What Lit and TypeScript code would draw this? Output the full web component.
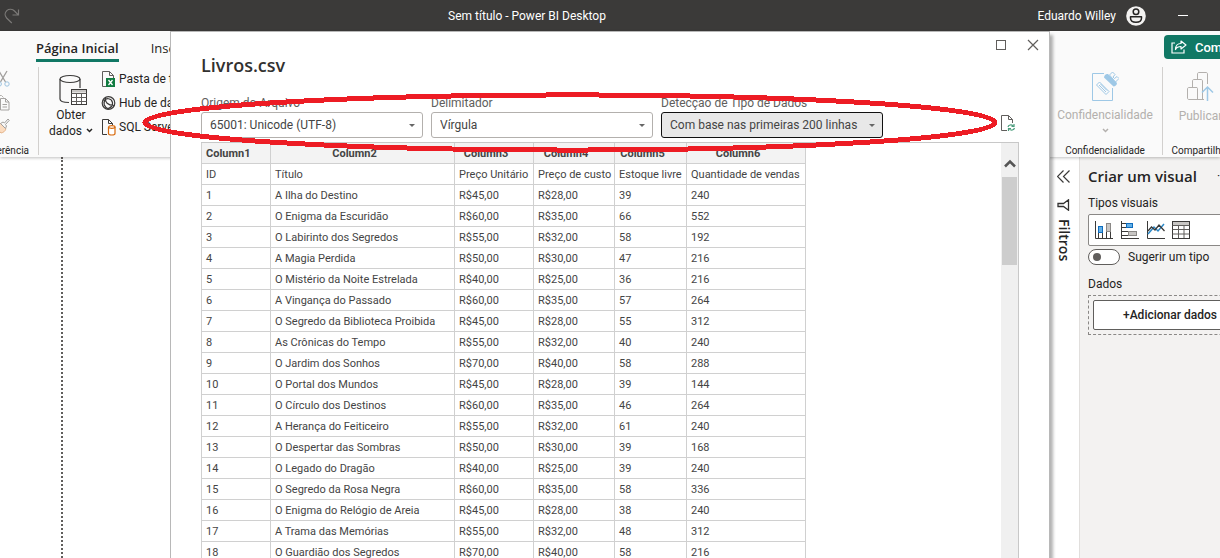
import { LitElement, html, css, svg } from "lit";
import { customElement, property } from "lit/decorators.js";

type Book = [string, string, string, string, string, string];

const BOOKS: Book[] = [
  ["ID", "Título", "Preço Unitário", "Preço de custo", "Estoque livre", "Quantidade de vendas"],
  ["1", "A Ilha do Destino", "R$45,00", "R$28,00", "39", "240"],
  ["2", "O Enigma da Escuridão", "R$60,00", "R$35,00", "66", "552"],
  ["3", "O Labirinto dos Segredos", "R$55,00", "R$32,00", "58", "192"],
  ["4", "A Magia Perdida", "R$50,00", "R$30,00", "47", "216"],
  ["5", "O Mistério da Noite Estrelada", "R$40,00", "R$25,00", "36", "216"],
  ["6", "A Vingança do Passado", "R$60,00", "R$35,00", "57", "264"],
  ["7", "O Segredo da Biblioteca Proibida", "R$45,00", "R$28,00", "55", "312"],
  ["8", "As Crônicas do Tempo", "R$55,00", "R$32,00", "40", "240"],
  ["9", "O Jardim dos Sonhos", "R$70,00", "R$40,00", "58", "288"],
  ["10", "O Portal dos Mundos", "R$45,00", "R$28,00", "39", "144"],
  ["11", "O Círculo dos Destinos", "R$60,00", "R$35,00", "46", "264"],
  ["12", "A Herança do Feiticeiro", "R$55,00", "R$32,00", "61", "240"],
  ["13", "O Despertar das Sombras", "R$50,00", "R$30,00", "39", "168"],
  ["14", "O Legado do Dragão", "R$40,00", "R$25,00", "39", "240"],
  ["15", "O Segredo da Rosa Negra", "R$60,00", "R$35,00", "58", "336"],
  ["16", "O Enigma do Relógio de Areia", "R$45,00", "R$28,00", "38", "240"],
  ["17", "A Trama das Memórias", "R$55,00", "R$32,00", "48", "312"],
  ["18", "O Guardião dos Segredos", "R$70,00", "R$40,00", "58", "216"],
];

const icon = (w: number, h: number, body: unknown) => html`
  <svg width=${w} height=${h} viewBox="0 0 ${w} ${h}" fill="none" aria-hidden="true">${body}</svg>`;

const icons = {
  redo: icon(16, 16, svg`<path d="M14.500 1.500v5.500H8.500M14 6.700 10.500 3C8.500.8 5 .7 2.800 2.600.6 4.700.6 7.800 2.600 10l5.200 5" stroke="#7b7977" stroke-width="1.200"/>`),
  user: icon(20, 20, svg`<circle cx="10" cy="10" r="9.800" fill="#f3f2f1"/><circle cx="10" cy="5.800" r="2.800" stroke="#252423" stroke-width="1.500"/><path d="M4.500 10.700h11v1.300c0 2.700-2.400 4.300-5.500 4.300S4.500 14.700 4.500 12z" stroke="#252423" stroke-width="1.500" stroke-linejoin="round"/>`),
  minimize: icon(10, 10, svg`<path d="M0 4.500h10" stroke="#fff"/>`),
  cut: icon(14, 18, svg`<path d="M3 1l6.500 11M11 1 4.500 12" stroke="#a19f9d" stroke-width="1.300"/><circle cx="3.200" cy="14" r="2.200" stroke="#9cc3e0"/><circle cx="11" cy="14" r="2.200" stroke="#9cc3e0"/>`),
  copy: icon(16, 16, svg`<path d="M6 12H1.500V.5h6l2 2" stroke="#b3b0ad"/><path d="M6.500 3.500h5l3.500 3.500v8H6.500zM11.500 3.500V7H15M8.500 9.500h4.500M8.500 12h4.500" stroke="#a6a4a2"/>`),
  brush: icon(16, 16, svg`<path d="M1 8.500 7 15c2.500-.5 4.500-2 5-4.500L6.500 5.500C5 7.500 3 8.300 1 8.500z" fill="#fbdcc0" stroke="#e5b58c"/><path d="M6.500 5.500 9 4l1.500 1L14 1l1.300 1.300L11.500 6.500l1 1.500-1 2.500z" stroke="#a19f9d" fill="#f8f8f8"/>`),
  database: icon(28, 32, svg`<ellipse cx="11" cy="5" rx="10" ry="3.500" stroke="#3b3a39" stroke-width="1.200"/><path d="M1 5v20c0 2 3.500 3.500 9 3.500M21 5v9" stroke="#3b3a39" stroke-width="1.200"/><rect x="12.500" y="15.500" width="15" height="15" fill="#fff" stroke="#3b3a39"/><path d="M13 16h14v2.500H13z" fill="#c8c6c4"/><path d="M12.500 19.500h15M12.500 23.500h15M12.500 27.500h15M17.500 19v11M22.500 19v11" stroke="#605e5c"/>`),
  chevron: icon(7, 5, svg`<path d="M1 1l2.500 2.500L6 1" stroke="currentColor" stroke-width="1.500"/>`),
  excel: icon(16, 17, svg`<path d="M5 15.500H1.500V.5h7l4 4V7M8.500.5v4h4" stroke="#605e5c"/><rect x="5" y="7" width="9" height="9" fill="#107c41"/><path d="M7.500 9l4 5M11.500 9l-4 5" stroke="#fff" stroke-width="1.300"/>`),
  hub: icon(16, 16, svg`<circle cx="7.500" cy="8" r="6.300" stroke="#3b3a39" stroke-width="1.200"/><path d="M4.500 3C4 7 6.500 10.500 13 10.500M2.500 6C5 2.500 10.500 3 11.500 7.500 12 10.500 9.500 13 6 14M4.500 4.500C1.500 8 3 12 7.500 14" stroke="#3b3a39" stroke-width="1.200"/>`),
  sql: icon(16, 17, svg`<path d="M6 15.500H1.500V.5h6l4 4V6M7.500.5v4h4" stroke="#3b3a39"/><path d="M7.500 8v6.500c0 1 1.500 1.500 3.300 1.500s3.200-.5 3.200-1.500V8" fill="#fff" stroke="#d8690b" stroke-width="1.200"/><ellipse cx="10.800" cy="8" rx="3.200" ry="1.300" fill="#fff" stroke="#d8690b" stroke-width="1.200"/>`),
  share: icon(16, 14, svg`<path d="M4 3H1v10h12V9.500" stroke="#fff" stroke-width="1.200"/><path d="M10 1l5 4-5 4V6.500C7 6.500 5.500 7.500 4.500 9.500c0-3.500 2-6 5.500-6z" stroke="#fff" stroke-width="1.200" stroke-linejoin="round"/>`),
  sensitivity: icon(28, 31, svg`<path d="M13 2.500H1.500v27h20V17" stroke="#9ec8e6"/><path d="M5.500 14 8.500 11l9.500 9.500-3 3z" stroke="#9ec8e6" fill="#fafafa"/><path d="M8 14l7 7M9.500 13l6.500 6.500" stroke="#9ec8e6"/><path d="M13 6.500c0-2 2-4 4-3.500l9 9c0 2-2 3.500-3.500 3.500z" fill="#9ec8e6"/><path d="M18.500 4l3-3 2.500 2.500-2 2.500 1.500 1.500L26 5.500 28 7.500l-3.500 3.500z" fill="#fafafa" stroke="#9ec8e6"/>`),
  publish: icon(28, 32, svg`<path d="M18 28.500H3c-1 0-1.500-.5-1.500-1.500v-9c0-1 .5-1.500 1.500-1.500h8M6.500 16.500V10c0-1 .5-1.500 1.500-1.500h7c1 0 1.500.5 1.500 1.500v18M11.500 8.500V3c0-1 .5-1.500 1.500-1.500h7c1 0 1.500.5 1.500 1.500v10M10.500 16.500c.7 0 1 .5 1 1v10.500" stroke="#b3b0ad"/><path d="M21.500 30V16M16 21.500l5.500-5.500 5.500 5.500" stroke="#9ec8e6" stroke-width="1.500"/>`),
  maximize: icon(12, 12, svg`<rect x="1.500" y="1.500" width="9" height="9" stroke="#605e5c"/>`),
  close: icon(12, 12, svg`<path d="M1 1l10 10M11 1 1 11" stroke="#605e5c" stroke-width="1.200"/>`),
  refresh: icon(16, 17, svg`<path d="M7 15.500H1.500V.5h7l4 4V8M8.500.5v4h4" stroke="#605e5c"/><path d="M8 12c.5-2 3.500-3 5-1M14 9v2.500h-2.500M14.500 13c-.5 2-3.500 3-5 1M8.500 16v-2.500H11" stroke="#4a9c7c" stroke-width="1.200"/>`),
  caret: icon(6, 3, svg`<path d="M0 0h6L3 3z" fill="#666"/>`),
  scrollUp: icon(12, 9, svg`<path d="M1 7.500 6 2.500l5 5" stroke="#555" stroke-width="2.500"/>`),
  collapse: icon(13, 13, svg`<path d="M6.500.5l-6 6 6 6M12.500.5l-6 6 6 6" stroke="#3b3a39" stroke-width="1.200"/>`),
  funnel: icon(13, 12, svg`<path d="M11.500.8v10.400L6.500 7.500H1v-3h5.500z" stroke="#323130" stroke-width="1.300"/>`),
  columns: icon(19, 19, svg`<path d="M1.500 0v17.500H19" stroke="#3b3a39"/><rect x="4.500" y="5.500" width="4" height="6" fill="#62b0e8" stroke="#0f6cbd"/><path d="M4.500 12v5M8.500 12v5M12.500 9v8M16.500 9v8" stroke="#3b3a39"/><rect x="12.500" y="2.500" width="4" height="8" fill="#c8c6c4" stroke="#8a8886"/>`),
  bars: icon(19, 19, svg`<path d="M1.500 0v18M2 2.500h4M2 6.500h4M2 10.500h7M2 14.500h7M2 17.500h17" stroke="#3b3a39"/><rect x="6.500" y="2.500" width="6" height="4" fill="#62b0e8" stroke="#0f6cbd"/><rect x="8.500" y="10.500" width="8" height="4" fill="#c8c6c4" stroke="#8a8886"/>`),
  lines: icon(19, 19, svg`<path d="M1.500 0v17.500H19" stroke="#3b3a39"/><path d="M2 13l6-7 4 4 6-7" stroke="#2b88c8" stroke-width="1.500"/><path d="M2 10l3.500-4L9 9l4-5 5.500 6" stroke="#3b3a39" stroke-width="1.300"/>`),
  grid: icon(19, 19, svg`<rect x=".5" y=".5" width="17" height="17" fill="#fff" stroke="#3b3a39"/><path d="M1 1h16v3H1z" fill="#c8c6c4"/><path d="M.5 4.500h17M.5 8.500h17M.5 13h17M6.500 4v13M12 4v13" stroke="#605e5c"/>`),
};

const base = css`
  * { box-sizing: border-box; }
  svg { display: block; flex: none; }
  button {
    font: inherit;
    color: inherit;
    background: none;
    border: 0;
    padding: 0;
    margin: 0;
    white-space: nowrap;
  }
`;

@customElement("option-field")
class OptionField extends LitElement {
  @property() label = "";
  @property() value = "";
  @property({ type: Boolean }) active = false;

  static styles = [base, css`
    :host { display: flex; flex-direction: column; gap: 0; flex: 0 1 222px; min-width: 0; }
    .label { font-size: 12px; line-height: 18px; white-space: nowrap; color: #605e5c; }
    .box { display: grid; align-items: center; }
    .box > * { grid-area: 1 / 1; }
    .box svg { justify-self: end; margin-right: 8px; pointer-events: none; }
    select {
      appearance: none;
      width: 100%;
      height: 26px;
      margin: 0;
      padding: 0 16px 0 8px;
      border: 1px solid #b3b0ad;
      border-radius: 3px;
      background: #fff;
      color: #444;
      font: inherit;
      font-size: 12px;
    }
    .active { background: #e8e8e8; border-color: #111; }
  `];

  render() {
    return html`
      <label class="label" for="field">${this.label}</label>
      <div class="box">
        <select id="field" class=${this.active ? "active" : ""}><option>${this.value}</option></select>
        ${icons.caret}
      </div>`;
  }
}

@customElement("csv-dialog")
class CsvDialog extends LitElement {
  static styles = [base, css`
    :host {
      display: flex;
      flex-direction: column;
      background: #fff;
      border: 1px solid #b8b8b8;
      box-shadow: 3px 4px 3px rgba(0, 0, 0, .3);
      color: #444;
      font-size: 11px;
    }
    .controls { display: flex; justify-content: flex-end; gap: 20px; padding: 7px 10px 0; height: 21px; }
    .controls button { height: 12px; }
    .title { margin: 0; padding-left: 30px; font-family: "Open Sans", sans-serif; font-size: 18px; line-height: 24px; font-weight: 600; color: #323130; }
    .options { display: flex; align-items: flex-end; gap: 8px; padding: 17px 30px 4px; }
    .refresh { margin: 0 3px 6px auto; }
    .preview {
      display: flex;
      justify-content: space-between;
      flex: 1;
      min-height: 0;
      overflow: hidden;
      margin: 0 30px;
      border-top: 1px solid #c8c8c8;
      border-right: 1px solid #c8c8c8;
    }
    table { table-layout: fixed; border-collapse: collapse; width: 605px; margin-top: -1px; align-self: flex-start; }
    th, td {
      height: 21px;
      padding: 2px 4px 0;
      border: 1px solid #d0d0d0;
      line-height: 18px;
      text-align: left;
      white-space: nowrap;
    }
    th { background: #f3f3f3; text-align: center; padding-right: 20px; }
    .id { width: 69px; }
    .name { width: 184px; }
    .price { width: 79px; }
    .cost { width: 81px; }
    .stock { width: 72px; }
    .sales { width: 119px; }
    th:first-child { text-align: left; }
    .scrollbar { display: flex; flex-direction: column; align-items: center; width: 17px; background: #f0f0f0; }
    .scrollbar button { padding: 16px 0 9px; }
    .thumb { width: 15px; height: 88px; background: #cdcdcd; }
    .mark { position: absolute; left: -26px; top: 65px; width: calc(100% - 28px); height: 51px; overflow: visible; pointer-events: none; }
  `];

  render() {
    return html`
      <div class="controls">
        <button aria-label="Maximizar">${icons.maximize}</button>
        <button aria-label="Fechar">${icons.close}</button>
      </div>
      <h1 class="title">Livros.csv</h1>
      <div class="options">
        <option-field label="Origem do Arquivo" value="65001: Unicode (UTF-8)"></option-field>
        <option-field label="Delimitador" value="Vírgula"></option-field>
        <option-field label="Detecção de Tipo de Dados" value="Com base nas primeiras 200 linhas" active></option-field>
        <button class="refresh" aria-label="Atualizar">${icons.refresh}</button>
      </div>
      <div class="preview">
        <table>
          <colgroup>${["id", "name", "price", "cost", "stock", "sales"].map((c) => html`<col class=${c}>`)}</colgroup>
          <thead><tr>${[1, 2, 3, 4, 5, 6].map((n) => html`<th>Column${n}</th>`)}</tr></thead>
          <tbody>${BOOKS.map((row) => html`<tr>${row.map((cell) => html`<td>${cell}</td>`)}</tr>`)}</tbody>
        </table>
        <div class="scrollbar">
          <button aria-label="Rolar para cima">${icons.scrollUp}</button>
          <div class="thumb"></div>
        </div>
      </div>
      <svg class="mark" aria-hidden="true" shape-rendering="crispEdges">
        <ellipse cx="50%" cy="50%" rx="50%" ry="54%" fill="none" stroke="#ed1c24" stroke-width="5"/>
      </svg>`;
  }
}

@customElement("app-root")
class AppRoot extends LitElement {
  static styles = [base, css`
    :host {
      display: flex;
      flex-direction: column;
      position: relative;
      height: 100vh;
      overflow: hidden;
      background: #fff;
      color: #252423;
      font-family: Roboto, "Open Sans", sans-serif;
      font-size: 12px;
    }
    .titlebar {
      display: grid;
      grid-template-columns: 1fr auto 1fr;
      align-items: center;
      flex: none;
      height: 31px;
      padding: 0 32px 0 4px;
      background: #3b3a39;
      color: #fff;
    }
    .caption { margin-right: 138px; }
    .account { display: flex; align-items: center; justify-content: flex-end; gap: 10px; white-space: nowrap; }
    .account .min { margin-left: 22px; }
    .ribbon {
      display: flex;
      justify-content: space-between;
      flex: none;
      height: 126px;
      background: #fafafa;
      box-shadow: 0 1px 3px rgba(0, 0, 0, .25);
      z-index: 1;
    }
    .left { width: 200px; overflow: hidden; }
    .tabs { display: flex; gap: 32px; height: 36px; padding: 6px 0 0 36px; font-family: "Open Sans", sans-serif; font-size: 13px; line-height: 22px; }
    .tabs a { color: inherit; text-decoration: none; height: 25px; }
    .tabs .current { font-weight: 600; border-bottom: 3px solid #117865; }
    .groups { display: flex; height: 88px; }
    .group { display: flex; flex: none; flex-direction: column; border-right: 1px solid #d2d0ce; }
    .foot { font-size: 10px; line-height: 12px; margin-top: auto; margin-bottom: -2px; white-space: nowrap; }
    .clipboard { width: 39px; align-items: flex-end; padding-right: 9px; }
    .tools { display: flex; flex-direction: column; align-items: flex-end; gap: 7px; padding-top: 3px; margin-right: 19px; }
    .fetch { display: flex; flex: none; flex-direction: column; align-items: center; width: 62px; padding: 7px 0 0 2px; line-height: 16px; }
    .fetch svg { margin-bottom: 1px; margin-left: 4px; }
    .line { display: flex; align-items: center; }
    .sources { display: flex; flex-direction: column; gap: 8px; padding-top: 4px; }
    .sources button { display: flex; align-items: center; gap: 2px; height: 16px; }
    .right { width: 170px; overflow: hidden; }
    .share {
      display: flex;
      align-items: center;
      gap: 8px;
      height: 24px;
      margin: 4px 0 8px 114px;
      padding: 0 12px 0 7px;
      border-radius: 4px;
      background: #117865;
      color: #fff;
      font-size: 13px;
      font-weight: 500;
    }
    .right .group { align-items: center; }
    .label { width: 113px; padding-right: 2px; }
    .publish { width: 76px; }
    .big { display: flex; flex-direction: column; align-items: center; gap: 5px; padding-top: 4px; color: #b3b0ad; line-height: 16px; }
    .main { display: flex; flex: 1; min-height: 0; }
    .canvas { flex: 1; padding-left: 61px; }
    .guide { height: 100%; border-left: 2px dotted #605e5c; }
    .filters {
      display: flex;
      flex-direction: column;
      align-items: center;
      gap: 16px;
      width: 36px;
      padding: 13px 0 0 4px;
      border-right: 1px solid #e1dfdd;
      font-family: "Open Sans", sans-serif;
      font-size: 14px;
      font-weight: 600;
    }
    .filters span { writing-mode: vertical-rl; line-height: 18px; margin-top: -8px; }
    .pane { width: 140px; overflow: hidden; background: #f3f2f1; padding: 9px 0 0 8px; }
    .head { display: flex; gap: 20px; width: 180px; line-height: 20px; }
    h2 { margin: 0; font-family: "Open Sans", sans-serif; font-size: 15px; font-weight: 600; white-space: nowrap; }
    .sub { margin: 9px 0 3px; line-height: 16px; }
    .types { display: flex; align-items: center; gap: 7px; width: 180px; height: 32px; padding-left: 5px; background: #fff; border: 1px solid #8a8886; border-radius: 2px; }
    .suggest { display: flex; align-items: center; gap: 8px; padding-top: 3px; margin-bottom: 11px; line-height: 16px; white-space: nowrap; }
    .suggest input {
      appearance: none;
      flex: none;
      width: 32px;
      height: 16px;
      margin: 0;
      padding: 3px 4px;
      border: 1px solid #605e5c;
      border-radius: 8px;
      background: #fff;
    }
    .suggest input::before { content: ""; display: block; width: 8px; height: 8px; border-radius: 50%; background: #605e5c; }
    .drop { width: 180px; padding: 4px; border: 1px dashed #8a8886; }
    .drop button { width: 100%; height: 30px; padding-left: 29px; text-align: left; background: #fff; border: 1px solid #605e5c; border-radius: 2px; font-weight: 500; }
    .dialog { position: absolute; z-index: 2; top: 31px; bottom: -40px; left: 170px; right: 170px; }
  `];

  render() {
    return html`
      <header class="titlebar">
        <button aria-label="Refazer">${icons.redo}</button>
        <span class="caption">Sem título - Power BI Desktop</span>
        <div class="account">
          <span>Eduardo Willey</span>${icons.user}
          <button class="min" aria-label="Minimizar">${icons.minimize}</button>
        </div>
      </header>
      <div class="ribbon">
        <div class="left">
          <nav class="tabs"><a class="current" href="#inicio">Página Inicial</a><a href="#inserir">Inserir</a></nav>
          <div class="groups">
            <div class="group clipboard">
              <div class="tools">
                <button aria-label="Recortar">${icons.cut}</button>
                <button aria-label="Copiar">${icons.copy}</button>
                <button aria-label="Pincel">${icons.brush}</button>
              </div>
              <span class="foot">Área de Transferência</span>
            </div>
            <button class="fetch">${icons.database}<span>Obter</span><span class="line">dados ${icons.chevron}</span></button>
            <div class="sources">
              <button>${icons.excel}Pasta de trabalho</button>
              <button>${icons.hub}Hub de dados</button>
              <button>${icons.sql}SQL Server</button>
            </div>
          </div>
        </div>
        <div class="right">
          <button class="share">${icons.share}Compartilhar</button>
          <div class="groups">
            <div class="group label">
              <button class="big" disabled>${icons.sensitivity}<span>Confidencialidade</span>${icons.chevron}</button>
              <span class="foot">Confidencialidade</span>
            </div>
            <div class="group publish">
              <button class="big" disabled>${icons.publish}<span>Publicar</span></button>
              <span class="foot">Compartilhar</span>
            </div>
          </div>
        </div>
      </div>
      <main class="main">
        <section class="canvas"><div class="guide"></div></section>
        <aside class="filters">
          <button aria-label="Expandir">${icons.collapse}</button>${icons.funnel}<span>Filtros</span>
        </aside>
        <aside class="pane">
          <div class="head"><h2>Criar um visual</h2><span>···</span></div>
          <div class="sub">Tipos visuais</div>
          <div class="types">
            <button aria-label="Colunas">${icons.columns}</button>
            <button aria-label="Barras">${icons.bars}</button>
            <button aria-label="Linhas">${icons.lines}</button>
            <button aria-label="Tabela">${icons.grid}</button>
          </div>
          <label class="suggest"><input type="checkbox" role="switch">Sugerir um tipo</label>
          <div class="sub">Dados</div>
          <div class="drop"><button>+Adicionar dados</button></div>
        </aside>
      </main>
      <csv-dialog class="dialog" role="dialog" aria-label="Livros.csv"></csv-dialog>`;
  }
}
